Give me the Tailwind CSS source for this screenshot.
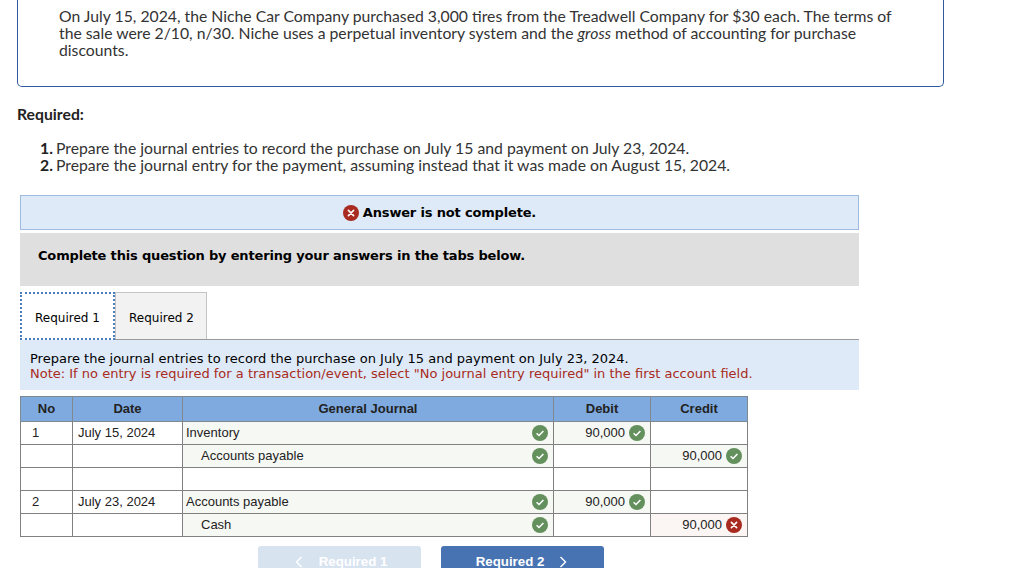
<!DOCTYPE html>
<html lang="en">
<head>
  <meta charset="UTF-8" />
  <title>Journal entries</title>
  <script src="https://cdn.jsdelivr.net/npm/@tailwindcss/browser@4"></script>
</head>
<body class="bg-white">
  <div class="h-[568px] overflow-hidden font-['Lato',sans-serif] text-[#333]">

    <!-- Question box -->
    <div class="ml-[17px] w-[927px] h-[87px] border border-t-0 border-[#2f5a9e] rounded-b-[5px] pl-[41px] pr-[30px] pt-[7px] text-[15.75px] leading-[17px]">
      On July 15, 2024, the Niche Car Company purchased 3,000 tires from the Treadwell Company for $30 each. The terms of the sale were 2/10, n/30. Niche uses a perpetual inventory system and the <i>gross</i> method of accounting for purchase discounts.
    </div>

    <p class="ml-[17px] mt-[18px] text-[15.75px] leading-[17px] font-bold text-[#222]">Required:</p>

    <ol class="mt-[17px] ml-[36px] text-[15.75px] leading-[17px]">
      <li class="flex"><b class="w-[17px] text-right text-[#222]">1.</b><span class="ml-[3px]">Prepare the journal entries to record the purchase on July 15 and payment on July 23, 2024.</span></li>
      <li class="flex"><b class="w-[17px] text-right text-[#222]">2.</b><span class="ml-[3px]">Prepare the journal entry for the payment, assuming instead that it was made on August 15, 2024.</span></li>
    </ol>

    <!-- Tabs section -->
    <div class="ml-[20px] w-[839px] mt-[22px] font-['DejaVu_Sans',sans-serif] text-black">
      <div class="h-[35px] bg-[#deeaf8] border border-[#9dbce0] flex items-center justify-center gap-[4px] text-[13px] tracking-[-0.17px] font-bold">
        <svg class="w-[16px] h-[16px]" viewBox="0 0 16 16"><circle cx="8" cy="8" r="8" fill="#a82a20"/><path d="M5.4 5.4l5.2 5.2M10.6 5.4l-5.2 5.2" stroke="#fff" stroke-width="1.6" stroke-linecap="round"/></svg>
        <span>Answer is not complete.</span>
      </div>
      <div class="mt-[3px] h-[53px] bg-[#dfdfdf] pl-[18px] pt-[14px] text-[13px] tracking-[-0.17px] leading-[18px] font-bold">Complete this question by entering your answers in the tabs below.</div>

      <div class="mt-[6px] h-[48px] flex items-end border-b border-[#999]">
        <div class="w-[95px] h-[48px] -mb-px pt-[3px] border-2 border-dotted border-[#4a7cc0] bg-white flex items-center justify-center text-[12px]">Required 1</div>
        <div class="w-[92px] h-[47px] pt-[3px] pl-[1px] border border-b-0 border-[#c4c4c4] bg-[#f2f2f2] flex items-center justify-center text-[12px]">Required 2</div>
      </div>

      <div class="h-[50px] bg-[#deeaf8] pl-[10px] pt-[11px] text-[13px] leading-[15px]">
        <p>Prepare the journal entries to record the purchase on July 15 and payment on July 23, 2024.</p>
        <p class="text-[#a82a20]">Note: If no entry is required for a transaction/event, select "No journal entry required" in the first account field.</p>
      </div>
    </div>

    <!-- Journal table -->
    <table class="ml-[20px] mt-[6px] w-[727px] table-fixed border-collapse font-['Liberation_Sans',sans-serif] text-[13px] text-[#222] border border-[#8a8a8a]">
      <colgroup>
        <col class="w-[52px]" /><col class="w-[110px]" /><col class="w-[371px]" /><col class="w-[97px]" /><col class="w-[97px]" />
      </colgroup>
      <thead>
        <tr class="h-[25px] bg-[#7faadf] font-bold text-center">
          <th class="border border-[#808890]">No</th>
          <th class="border border-[#808890]">Date</th>
          <th class="border border-[#808890]">General Journal</th>
          <th class="border border-[#808890]">Debit</th>
          <th class="border border-[#808890]">Credit</th>
        </tr>
      </thead>
      <tbody>
        <tr class="h-[23px]">
          <td class="border border-[#808080] pl-[11px]">1</td>
          <td class="border border-[#808080] pl-[5px]">July 15, 2024</td>
          <td class="border border-[#808080] bg-[#f6f8f3] pl-[3px] pr-[5px]"><div class="flex items-center justify-between">Inventory<svg class="w-[16px] h-[16px]" viewBox="0 0 16 16"><circle cx="8" cy="8" r="8" fill="#64905e"/><path d="M4.6 8.2l2.4 2.3 4.4-4.6" fill="none" stroke="#fff" stroke-width="1.5"/></svg></div></td>
          <td class="border border-[#808080] bg-[#f6f8f3] pr-[5px]"><div class="flex items-center justify-end gap-[4px]">90,000<svg class="w-[16px] h-[16px]" viewBox="0 0 16 16"><circle cx="8" cy="8" r="8" fill="#64905e"/><path d="M4.6 8.2l2.4 2.3 4.4-4.6" fill="none" stroke="#fff" stroke-width="1.5"/></svg></div></td>
          <td class="border border-[#808080]"></td>
        </tr>
        <tr class="h-[23px]">
          <td class="border border-[#808080]"></td>
          <td class="border border-[#808080]"></td>
          <td class="border border-[#808080] bg-[#f6f8f3] pl-[18px] pr-[5px]"><div class="flex items-center justify-between">Accounts payable<svg class="w-[16px] h-[16px]" viewBox="0 0 16 16"><circle cx="8" cy="8" r="8" fill="#64905e"/><path d="M4.6 8.2l2.4 2.3 4.4-4.6" fill="none" stroke="#fff" stroke-width="1.5"/></svg></div></td>
          <td class="border border-[#808080]"></td>
          <td class="border border-[#808080] bg-[#f6f8f3] pr-[5px]"><div class="flex items-center justify-end gap-[4px]">90,000<svg class="w-[16px] h-[16px]" viewBox="0 0 16 16"><circle cx="8" cy="8" r="8" fill="#64905e"/><path d="M4.6 8.2l2.4 2.3 4.4-4.6" fill="none" stroke="#fff" stroke-width="1.5"/></svg></div></td>
        </tr>
        <tr class="h-[23px]">
          <td class="border border-[#808080]"></td>
          <td class="border border-[#808080]"></td>
          <td class="border border-[#808080]"></td>
          <td class="border border-[#808080]"></td>
          <td class="border border-[#808080]"></td>
        </tr>
        <tr class="h-[23px]">
          <td class="border border-[#808080] pl-[11px]">2</td>
          <td class="border border-[#808080] pl-[5px]">July 23, 2024</td>
          <td class="border border-[#808080] bg-[#f6f8f3] pl-[3px] pr-[5px]"><div class="flex items-center justify-between">Accounts payable<svg class="w-[16px] h-[16px]" viewBox="0 0 16 16"><circle cx="8" cy="8" r="8" fill="#64905e"/><path d="M4.6 8.2l2.4 2.3 4.4-4.6" fill="none" stroke="#fff" stroke-width="1.5"/></svg></div></td>
          <td class="border border-[#808080] bg-[#f6f8f3] pr-[5px]"><div class="flex items-center justify-end gap-[4px]">90,000<svg class="w-[16px] h-[16px]" viewBox="0 0 16 16"><circle cx="8" cy="8" r="8" fill="#64905e"/><path d="M4.6 8.2l2.4 2.3 4.4-4.6" fill="none" stroke="#fff" stroke-width="1.5"/></svg></div></td>
          <td class="border border-[#808080]"></td>
        </tr>
        <tr class="h-[23px]">
          <td class="border border-[#808080]"></td>
          <td class="border border-[#808080]"></td>
          <td class="border border-[#808080] bg-[#f6f8f3] pl-[18px] pr-[5px]"><div class="flex items-center justify-between">Cash<svg class="w-[16px] h-[16px]" viewBox="0 0 16 16"><circle cx="8" cy="8" r="8" fill="#64905e"/><path d="M4.6 8.2l2.4 2.3 4.4-4.6" fill="none" stroke="#fff" stroke-width="1.5"/></svg></div></td>
          <td class="border border-[#808080]"></td>
          <td class="border border-[#808080] bg-[#fbf5f4] pr-[5px]"><div class="flex items-center justify-end gap-[4px]">90,000<svg class="w-[16px] h-[16px]" viewBox="0 0 16 16"><circle cx="8" cy="8" r="8" fill="#a82a20"/><path d="M5.4 5.4l5.2 5.2M10.6 5.4l-5.2 5.2" stroke="#fff" stroke-width="1.6" stroke-linecap="round"/></svg></div></td>
        </tr>
      </tbody>
    </table>

    <!-- Prev / next buttons, cut off by the page edge -->
    <div class="ml-[258px] mt-[9px] flex gap-[20px] font-['Liberation_Sans',sans-serif] text-[13.3px] font-bold text-white">
      <div class="w-[163px] h-[40px] rounded-t-[3px] bg-[#d8e3f0] pt-[7px] pl-[3px] flex justify-center gap-[16px] leading-[17px]">
        <svg class="w-[8px] h-[12px] mt-[3px]" viewBox="0 0 8 12"><path d="M6.5 1L1.5 6l5 5" fill="none" stroke="#fff" stroke-width="1.4"/></svg>
        <span>Required 1</span>
      </div>
      <div class="w-[163px] h-[40px] rounded-t-[3px] bg-[#4873b3] pt-[7px] pr-[2px] flex justify-center gap-[15px] leading-[17px]">
        <span>Required 2</span>
        <svg class="w-[8px] h-[12px] mt-[3px]" viewBox="0 0 8 12"><path d="M1.5 1l5 5-5 5" fill="none" stroke="#fff" stroke-width="1.4"/></svg>
      </div>
    </div>
  </div>
</body>
</html>
